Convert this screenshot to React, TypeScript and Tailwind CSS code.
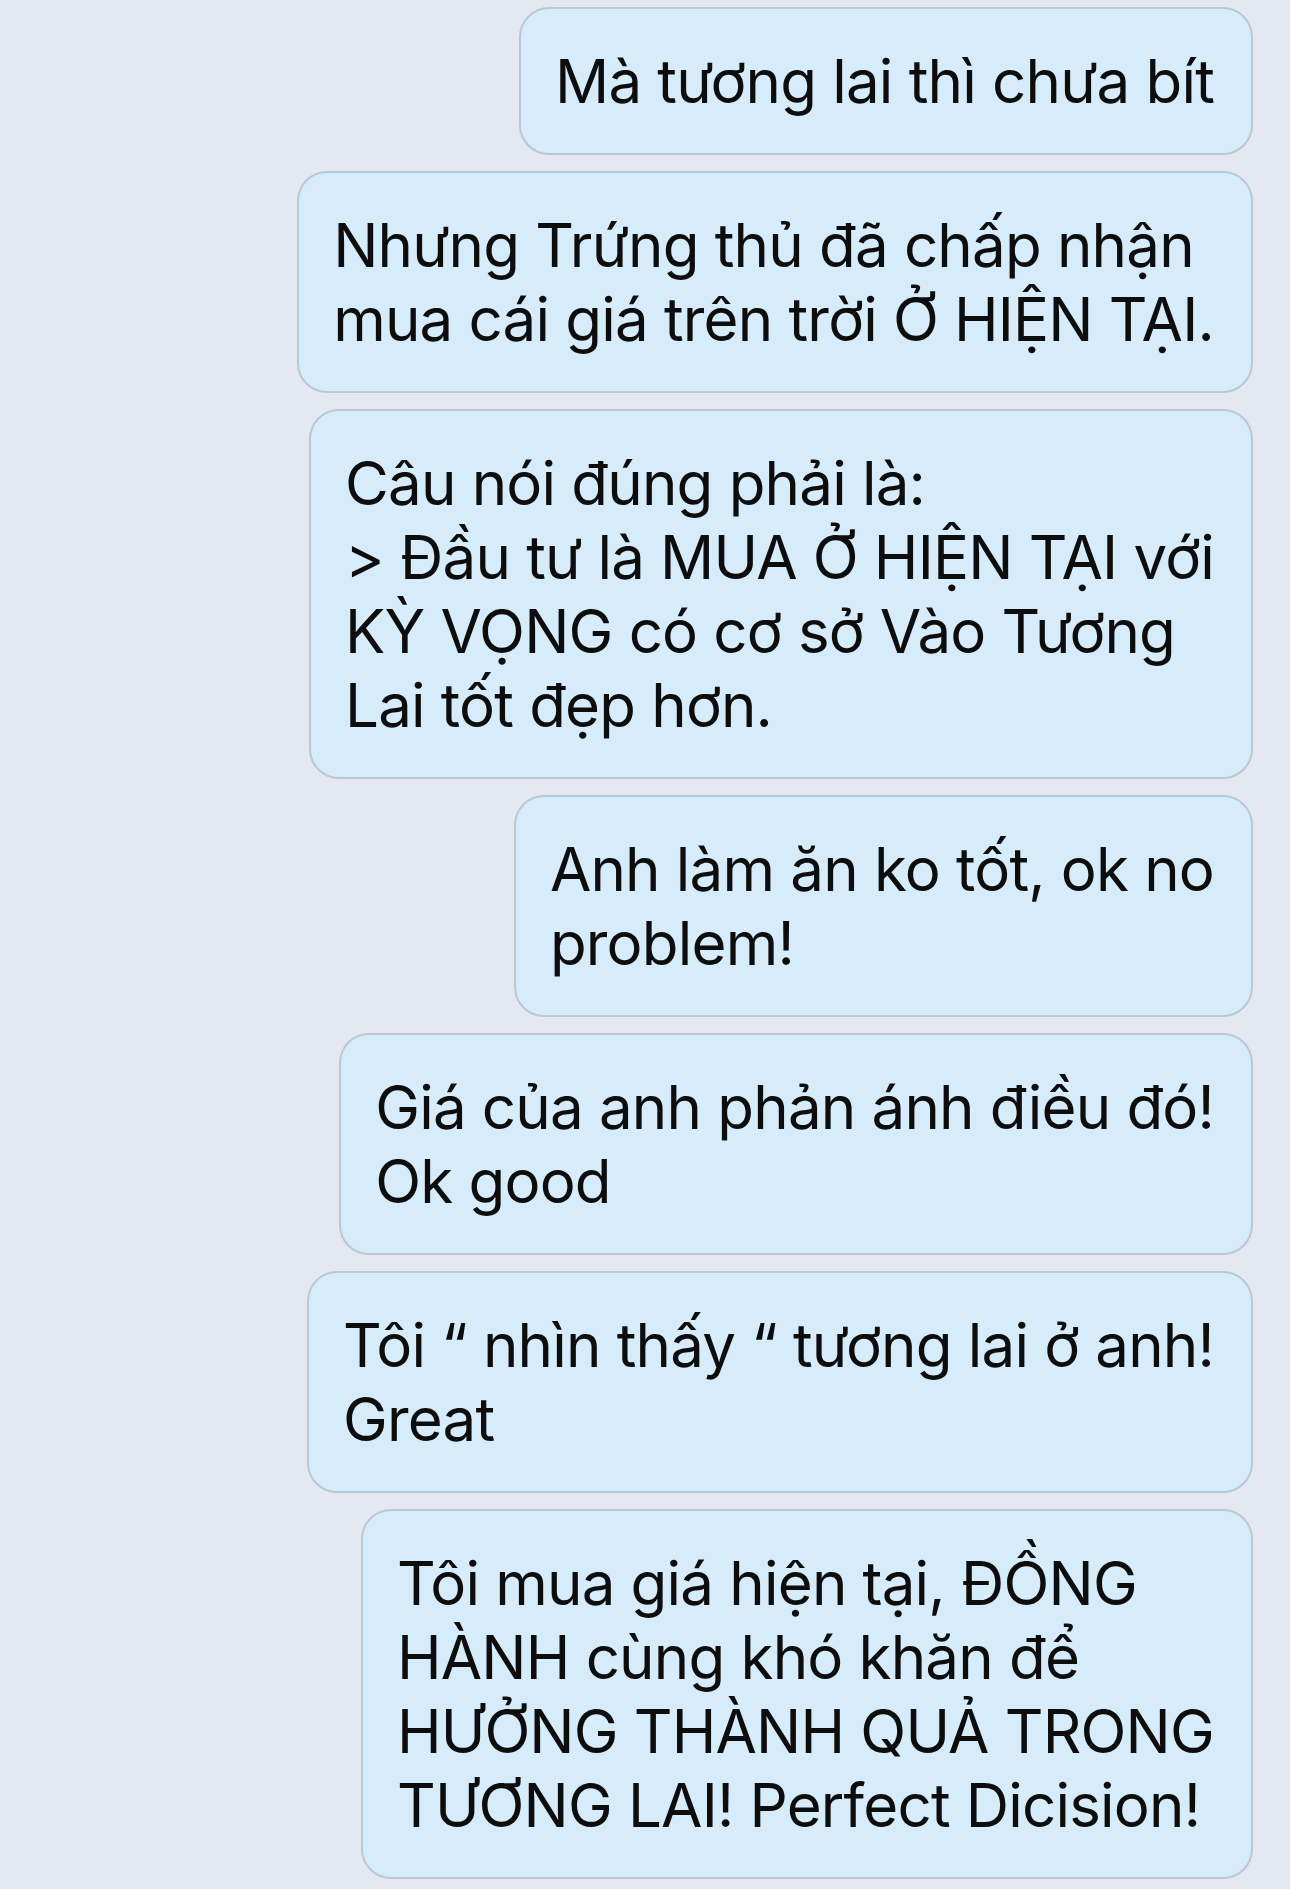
const messages: string[][] = [
  ["Mà tương lai thì chưa bít"],
  ["Nhưng Trứng thủ đã chấp nhận", "mua cái giá trên trời Ở HIỆN TẠI."],
  [
    "Câu nói đúng phải là:",
    "> Đầu tư là MUA Ở HIỆN TẠI với",
    "KỲ VỌNG có cơ sở Vào Tương",
    "Lai tốt đẹp hơn.",
  ],
  ["Anh làm ăn ko tốt, ok no", "problem!"],
  ["Giá của anh phản ánh điều đó!", "Ok good"],
  ["Tôi “ nhìn thấy “ tương lai ở anh!", "Great"],
  [
    "Tôi mua giá hiện tại, ĐỒNG",
    "HÀNH cùng khó khăn để",
    "HƯỞNG THÀNH QUẢ TRONG",
    "TƯƠNG LAI! Perfect Dicision!",
  ],
];

function Bubble({ lines }: { lines: string[] }) {
  return (
    <div className="w-fit rounded-[30px] border-2 border-[#b9c8d4] bg-[#d6ecfa] py-[35px] pl-[34px] pr-[37px] text-[60px] leading-[74px] tracking-[-0.8px] text-[#0d0d0d]">
      {lines.map((line, i) => (
        <div key={i} className="whitespace-nowrap">
          {line}
        </div>
      ))}
    </div>
  );
}

export default function App() {
  return (
    <div
      className="flex min-h-[1889px] w-full flex-col items-end gap-4 bg-[#e4e8f0] pt-[7px] pr-[37px]"
      style={{ fontFamily: 'Inter, "Liberation Sans", Arial, sans-serif' }}
    >
      {messages.map((lines, i) => (
        <Bubble key={i} lines={lines} />
      ))}
    </div>
  );
}
